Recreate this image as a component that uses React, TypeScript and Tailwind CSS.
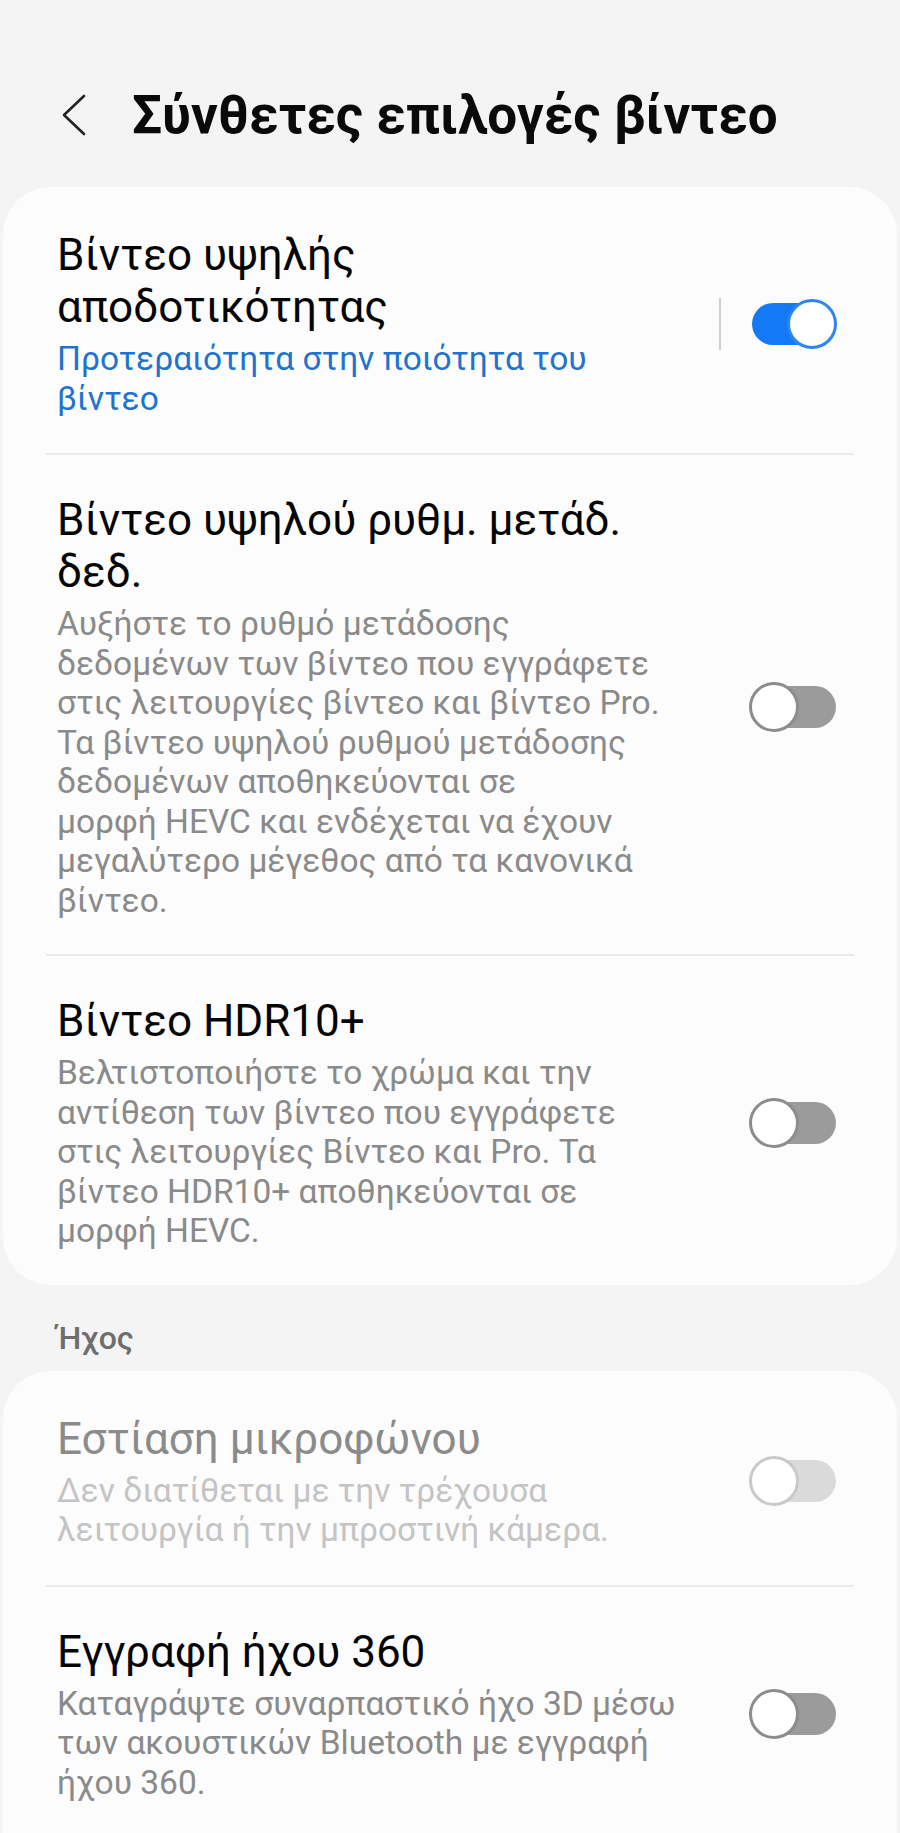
import React from "react";

type ToggleProps = { on?: boolean; disabled?: boolean };

function Toggle({ on = false, disabled = false }: ToggleProps) {
  if (on) {
    return (
      <div className="relative w-[88px] h-[50px] shrink-0">
        <div className="absolute left-[3px] right-[1px] top-[4px] h-[42px] rounded-full bg-[#1479f4]" />
        <div className="absolute right-0 top-0 w-[50px] h-[50px] rounded-full bg-white border-[3px] border-[#2d86ee]" />
      </div>
    );
  }
  return (
    <div className="relative w-[88px] h-[50px] shrink-0">
      <div
        className={
          disabled
            ? "absolute left-[3px] right-[1px] top-[4px] h-[42px] rounded-full bg-[#dadada]"
            : "absolute left-[3px] right-[1px] top-[4px] h-[42px] rounded-full bg-[#9b9b9b]"
        }
      />
      <div
        className={
          disabled
            ? "absolute left-0 top-0 w-[50px] h-[50px] rounded-full bg-white border-[3px] border-[#c9c9c9]"
            : "absolute left-0 top-0 w-[50px] h-[50px] rounded-full bg-white border-[3px] border-[#8c8c8c]"
        }
      />
    </div>
  );
}

type RowProps = {
  title: string[];
  desc: string[];
  descClass: string;
  titleClass?: string;
  pt: string;
  pb: string;
  toggle: React.ReactNode;
  divider?: boolean;
};

function Row({ title, desc, descClass, titleClass = "text-[#050505]", pt, pb, toggle, divider }: RowProps) {
  return (
    <div className={`flex items-center pl-[54px] pr-[60px] ${pt} ${pb}`}>
      <div className="flex-1 min-w-0">
        <div className={`text-[44px] leading-[52px] ${titleClass}`}>
          {title.map((t, i) => (
            <div key={i} className="whitespace-nowrap">{t}</div>
          ))}
        </div>
        <div className={`mt-[6px] text-[33.5px] leading-[39.5px] ${descClass}`}>
          {desc.map((t, i) => (
            <div key={i} className="whitespace-nowrap">{t}</div>
          ))}
        </div>
      </div>
      {divider && <div className="w-[2px] h-[52px] bg-[#cfcfcf] mr-[28px] shrink-0" />}
      {toggle}
    </div>
  );
}

function Divider() {
  return <div className="mx-[43px] h-[2px] bg-[#eaeaea]" />;
}

export default function App() {
  return (
    <div
      className="w-[900px] h-[1833px] overflow-hidden bg-[#f4f4f4]"
      style={{ fontFamily: "Roboto, 'Noto Sans', sans-serif" }}
    >
      <div className="flex items-center pt-[85px] h-[145px]">
        <div className="w-[132px] flex justify-start pl-[60px] shrink-0">
          <svg width="28" height="44" viewBox="0 0 28 44" fill="none">
            <path d="M24 3 L4 22 L24 41" stroke="#222222" strokeWidth="2.6" strokeLinecap="round" strokeLinejoin="round" />
          </svg>
        </div>
        <div className="text-[53px] leading-[60px] font-bold text-[#0a0a0a] whitespace-nowrap">
          Σύνθετες επιλογές βίντεο
        </div>
      </div>

      <div className="mt-[42px] mx-[3px] rounded-[48px] bg-[#fcfcfc]">
        <Row
          pt="pt-[42px]"
          pb="pb-[35px]"
          title={["Βίντεο υψηλής", "αποδοτικότητας"]}
          desc={["Προτεραιότητα στην ποιότητα του", "βίντεο"]}
          descClass="text-[#1f73cf]"
          divider
          toggle={<Toggle on />}
        />
        <Divider />
        <Row
          pt="pt-[39px]"
          pb="pb-[34px]"
          title={["Βίντεο υψηλού ρυθμ. μετάδ.", "δεδ."]}
          desc={[
            "Αυξήστε το ρυθμό μετάδοσης",
            "δεδομένων των βίντεο που εγγράφετε",
            "στις λειτουργίες βίντεο και βίντεο Pro.",
            "Τα βίντεο υψηλού ρυθμού μετάδοσης",
            "δεδομένων αποθηκεύονται σε",
            "μορφή HEVC και ενδέχεται να έχουν",
            "μεγαλύτερο μέγεθος από τα κανονικά",
            "βίντεο.",
          ]}
          descClass="text-[#8a8a8a]"
          toggle={<Toggle />}
        />
        <Divider />
        <Row
          pt="pt-[39px]"
          pb="pb-[34px]"
          title={["Βίντεο HDR10+"]}
          desc={[
            "Βελτιστοποιήστε το χρώμα και την",
            "αντίθεση των βίντεο που εγγράφετε",
            "στις λειτουργίες Βίντεο και Pro. Τα",
            "βίντεο HDR10+ αποθηκεύονται σε",
            "μορφή HEVC.",
          ]}
          descClass="text-[#8a8a8a]"
          toggle={<Toggle />}
        />
      </div>

      <div className="mt-[37px] pl-[57px] text-[32px] leading-[32px] font-medium text-[#6e6e6e]">
        Ήχος
      </div>

      <div className="mt-[17px] mx-[3px] rounded-t-[48px] bg-[#fcfcfc] pb-[40px]">
        <Row
          pt="pt-[42px]"
          pb="pb-[35px]"
          title={["Εστίαση μικροφώνου"]}
          titleClass="text-[#8b8b8b]"
          desc={["Δεν διατίθεται με την τρέχουσα", "λειτουργία ή την μπροστινή κάμερα."]}
          descClass="text-[#c4c4c4]"
          toggle={<Toggle disabled />}
        />
        <Divider />
        <Row
          pt="pt-[39px]"
          pb="pb-[29px]"
          title={["Εγγραφή ήχου 360"]}
          desc={[
            "Καταγράψτε συναρπαστικό ήχο 3D μέσω",
            "των ακουστικών Bluetooth με εγγραφή",
            "ήχου 360.",
          ]}
          descClass="text-[#8a8a8a]"
          toggle={<Toggle />}
        />
      </div>
    </div>
  );
}
